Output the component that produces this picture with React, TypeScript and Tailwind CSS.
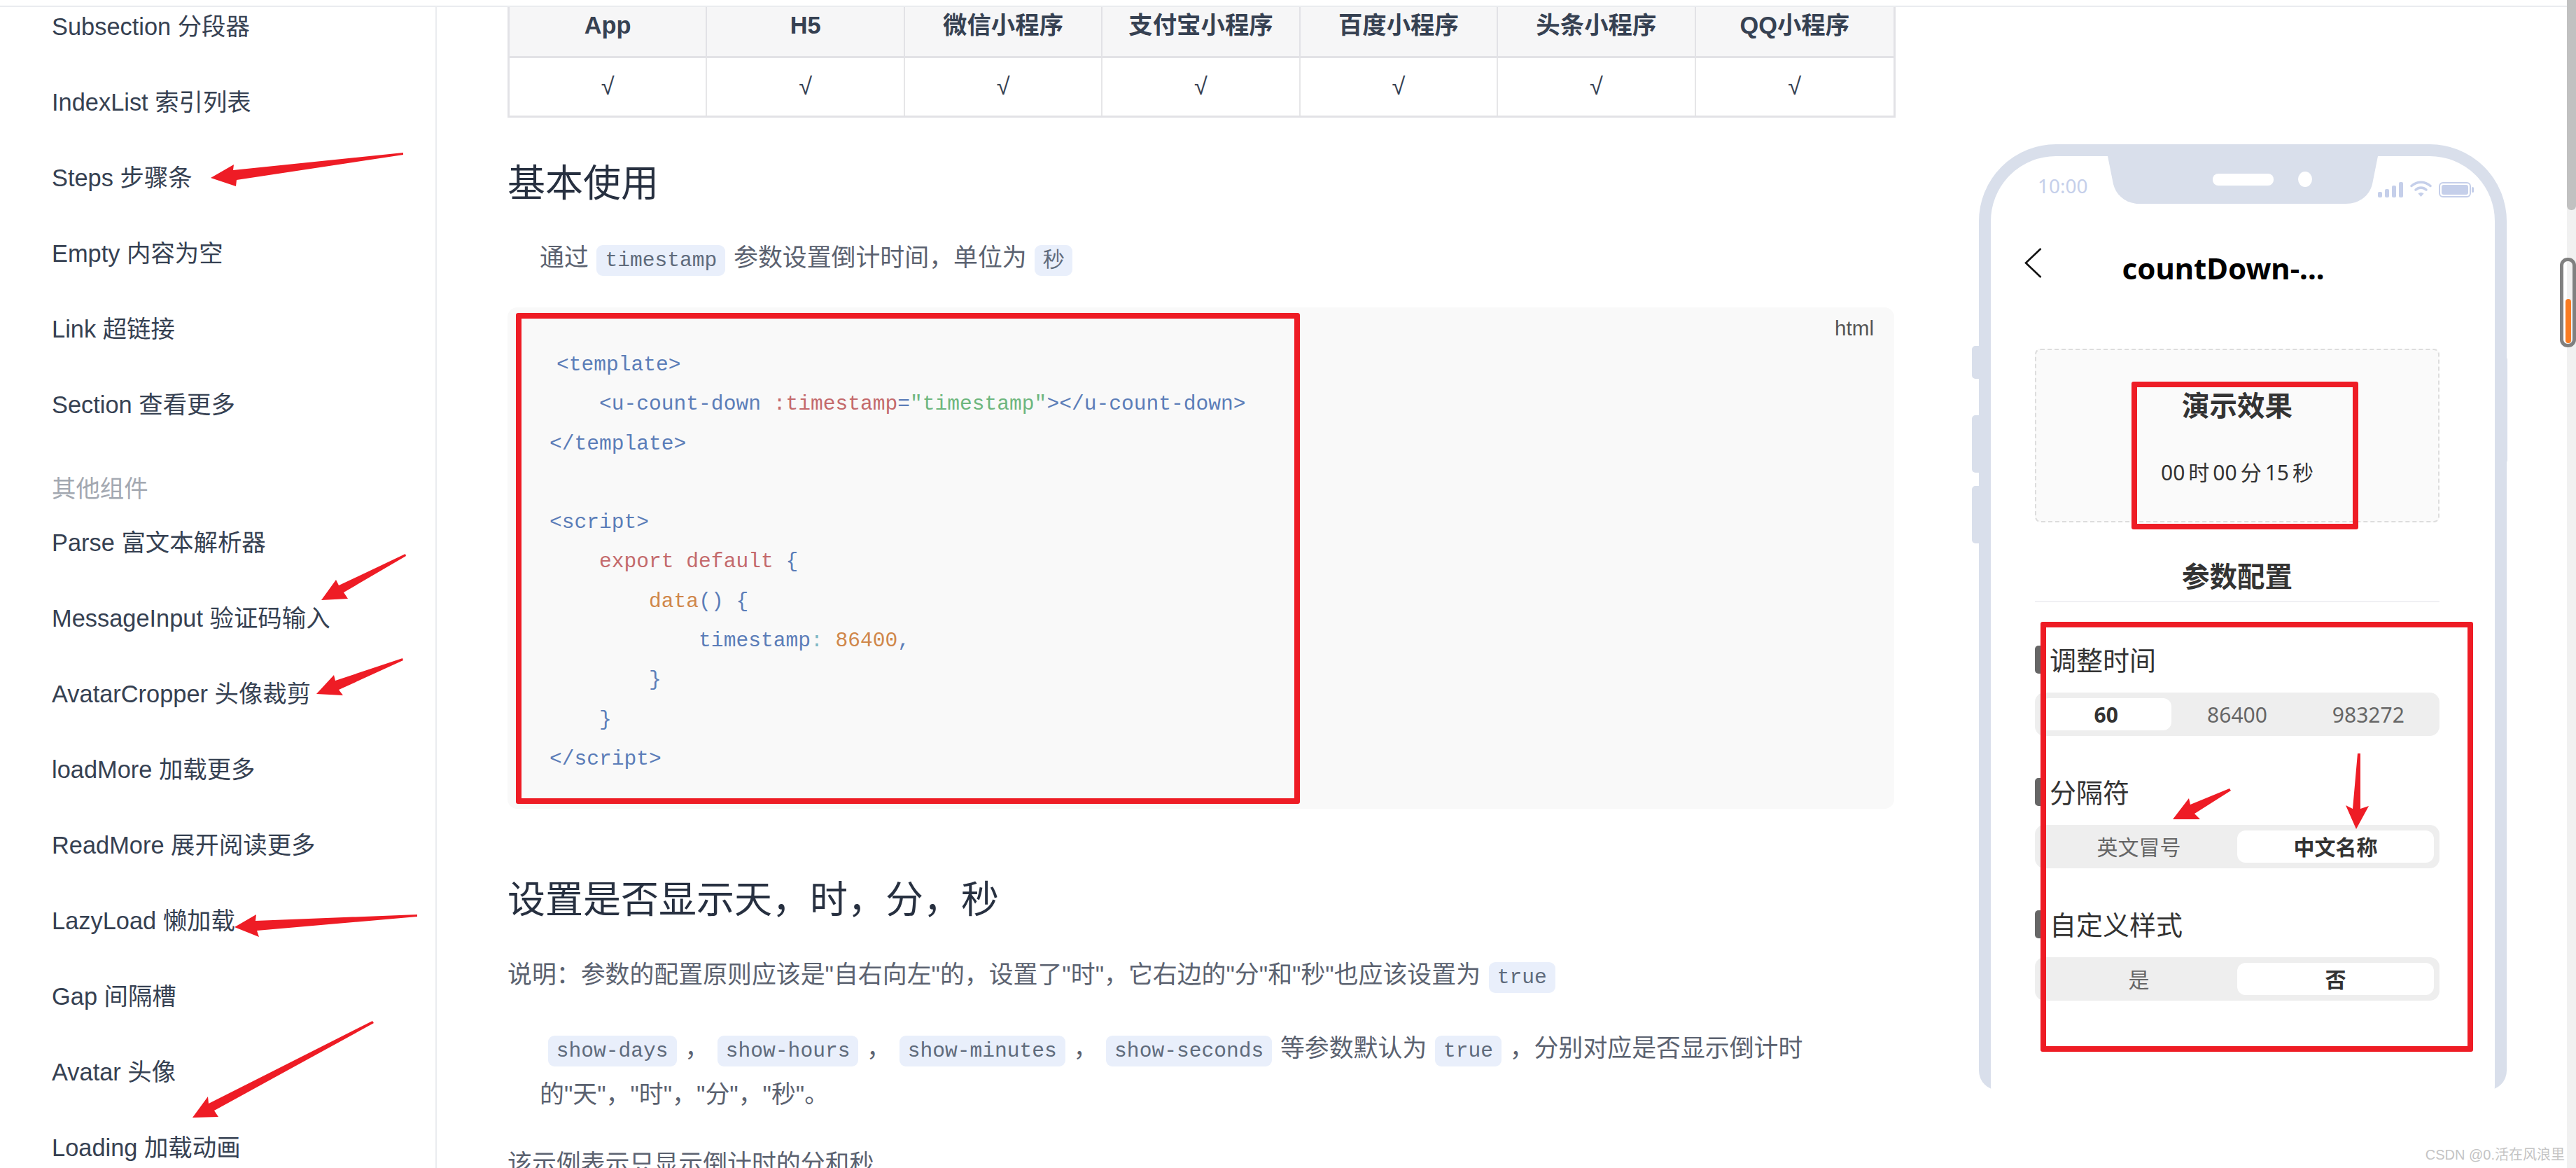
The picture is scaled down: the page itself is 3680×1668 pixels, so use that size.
const sans = "font-['Liberation_Sans','Noto_Sans_CJK_SC',sans-serif]"

const menuTop = ['Subsection 分段器', 'IndexList 索引列表', 'Steps 步骤条', 'Empty 内容为空', 'Link 超链接', 'Section 查看更多']
const menuOther = ['Parse 富文本解析器', 'MessageInput 验证码输入', 'AvatarCropper 头像裁剪', 'loadMore 加载更多', 'ReadMore 展开阅读更多', 'LazyLoad 懒加载', 'Gap 间隔槽', 'Avatar 头像', 'Loading 加载动画']
const platforms = ['App', 'H5', '微信小程序', '支付宝小程序', '百度小程序', '头条小程序', 'QQ小程序']

const arrows = [
  '301,254 334,235 333,243 576,218 576,221 338,257 337,266',
  '459,857 480,828 484,836 579,791 580,794 491,846 497,855',
  '452,991 477,964 479,972 575,940 576,943 484,985 490,993',
  '335,1324 366,1306 365,1315 596,1306 596,1309 367,1329 370,1338',
  '275,1596 297,1566 298,1576 532,1458 534,1461 306,1586 312,1595',
  '3104,1170 3127,1140 3129,1149 3185,1126 3187,1129 3135,1162 3143,1170',
  '3366,1184 3351,1150 3361,1155 3368,1076 3372,1076 3372,1155 3384,1151',
]

const Tag = ({ children }: { children: string }) => (
  <code className="mx-[2px] rounded-[9px] bg-[#e9effb] px-[12px] py-[5px] font-['Liberation_Mono',monospace] text-[29.6px] text-[#5f6b7c]">
    {children}
  </code>
)

const Blue = ({ children }: { children: string }) => <span className="text-[#5b7db8]">{children}</span>
const Red = ({ children }: { children: string }) => <span className="text-[#c46a6c]">{children}</span>
const Green = ({ children }: { children: string }) => <span className="text-[#6db67e]">{children}</span>
const Orange = ({ children }: { children: string }) => <span className="text-[#d0874a]">{children}</span>

const CodeBlock = () => (
  <div className="relative mt-[36px] h-[716px] w-[1981px] rounded-[14px] bg-[#f9f9f9] pl-[60px] pt-[54px]">
    <span className="absolute right-[29px] top-[8px] text-[29.6px] text-[#555]">html</span>
    <pre className="font-['Liberation_Mono',monospace] text-[29.6px] leading-[56.3px] text-[#5b7db8]">
      <div className="pl-[10px]"><Blue>{'<template>'}</Blue></div>
      <div><Blue>{'    <u-count-down '}</Blue><Red>:timestamp</Red>=<Green>"timestamp"</Green><Blue>{'></u-count-down>'}</Blue></div>
      <div><Blue>{'</template>'}</Blue></div>
      <div>&nbsp;</div>
      <div><Blue>{'<script>'}</Blue></div>
      <div><Red>{'    export default'}</Red>{' {'}</div>
      <div><Orange>{'        data'}</Orange>{'() {'}</div>
      <div>{'            timestamp'}<span className="text-[#7fb7c4]">:</span> <Orange>86400</Orange>,</div>
      <div>{'        }'}</div>
      <div>{'    }'}</div>
      <div>{'</script>'}</div>
    </pre>
    {/* red annotation frame */}
    <div className="absolute left-[12px] top-[8px] h-[701px] w-[1120px] rounded-[3px] border-[8px] border-[#ee1c25]" />
  </div>
)

const StatusIcons = () => (
  <div className="flex items-end gap-[10px] text-[#c5cfea]">
    <svg width="36" height="22" viewBox="0 0 36 22" fill="currentColor">
      <rect x="0" y="14" width="6" height="8" rx="2" />
      <rect x="10" y="10" width="6" height="12" rx="2" />
      <rect x="20" y="5" width="6" height="17" rx="2" />
      <rect x="30" y="0" width="6" height="22" rx="2" />
    </svg>
    <svg width="31" height="24" viewBox="0 0 31 24" fill="none" stroke="currentColor" strokeWidth="3.5" strokeLinecap="round">
      <path d="M2 7.500C10 0.500 21 0.500 29 7.500" />
      <path d="M8 13C12.500 9 18.500 9 23 13" />
      <path d="M15.500 23L11.500 18.500C13.500 16.500 17.500 16.500 19.500 18.500Z" fill="currentColor" stroke="none" />
    </svg>
    <svg width="50" height="22" viewBox="0 0 50 22" fill="currentColor">
      <rect x="1" y="1" width="44" height="20" rx="5" fill="none" stroke="currentColor" strokeWidth="2" />
      <rect x="4" y="4" width="38" height="14" rx="3" />
      <rect x="47" y="7" width="3" height="8" rx="1.500" />
    </svg>
  </div>
)

const Segment = ({ options, active }: { options: string[]; active: number }) => (
  <div className="flex h-[62px] w-[578px] gap-0 rounded-[14px] bg-[#eeeeee] p-[8px]">
    {options.map((opt, i) => (
      <div
        key={opt}
        className={`flex flex-1 items-center justify-center rounded-[12px] text-[30px] ${
          i === active ? 'bg-white font-bold text-[#333]' : 'text-[#666]'
        }`}
      >
        {opt}
      </div>
    ))}
  </div>
)

const Param = ({ label, options, active }: { label: string; options: string[]; active: number }) => (
  <div className="flex flex-col">
    <div className="flex h-[40px] items-center gap-[12px]">
      <span className="h-[40px] w-[9px] rounded-l-[5px] bg-[#666]" />
      <span className="text-[38px] leading-[40px] text-[#333]">{label}</span>
    </div>
    <div className="mt-[27px]">
      <Segment options={options} active={active} />
    </div>
  </div>
)

const Phone = () => (
  <div className="relative ml-[93px] mt-[196px] w-[765px] pl-[10px] font-['Noto_Sans','Noto_Sans_CJK_SC',sans-serif]">
    {/* side buttons */}
    <div className="absolute left-0 top-[288px] h-[47px] w-[12px] rounded-l-[5px] bg-[#d9dfeb]" />
    <div className="absolute left-0 top-[387px] h-[82px] w-[12px] rounded-l-[5px] bg-[#d9dfeb]" />
    <div className="absolute left-0 top-[488px] h-[82px] w-[12px] rounded-l-[5px] bg-[#d9dfeb]" />
    <div className="absolute left-[752px] top-[303px] h-[153px] w-[13px] rounded-r-[5px] bg-[#d9dfeb]" />

    <div className="h-[1351px] w-[754px] overflow-hidden rounded-b-[28px]">
      <div className="relative h-[1452px] rounded-[110px] border-[17px] border-[#d9dfeb] bg-white">
        {/* notch */}
        <svg className="absolute left-[167px] top-0" width="386" height="68" viewBox="0 0 386 68">
          <path d="M0 0H386L378 40C374 56 360 68 340 68H46C26 68 12 56 8 40Z" fill="#d9dfeb" />
          <rect x="150" y="25" width="87" height="17" rx="8" fill="#fff" />
          <ellipse cx="282" cy="33" rx="10" ry="11" fill="#fff" />
        </svg>

        <div className="flex h-[85px] items-end justify-between pb-[26px] pl-[67px] pr-[30px]">
          <span className="text-[28px] leading-[34px] text-[#c5cfea]">10:00</span>
          <StatusIcons />
        </div>

        <div className="relative mt-[42px] flex h-[64px] items-center justify-center pr-[56px]">
          <svg className="absolute left-[48px] top-[4px]" width="25" height="43" viewBox="0 0 25 43" fill="none" stroke="#111" strokeWidth="2.600">
            <path d="M23.500 1L2 21.500L23.500 42" />
          </svg>
          <span className="text-[42px] font-bold text-black">countDown-...</span>
        </div>

        <div className="relative ml-[63px] mt-[84px] flex h-[248px] w-[578px] flex-col items-center rounded-[8px] border-2 border-dashed border-[#dddddd] bg-[#fafafa] pt-[54px]">
          <span className="text-[39.500px] font-bold leading-[50px] text-[#333]">演示效果</span>
          <div className="mt-[50px] flex items-center gap-[5px] text-[30px] leading-[42px] text-[#333]">
            <span>00</span><span>时</span><span>00</span><span>分</span><span>15</span><span>秒</span>
          </div>
          {/* red annotation frame */}
          <div className="absolute left-[136px] top-[45px] h-[211px] w-[324px] rounded-[3px] border-[8px] border-[#ee1c25]" />
        </div>

        <div className="ml-[63px] mt-[52px] flex h-[62px] w-[578px] items-start justify-center border-b-2 border-[#f0f0f3]">
          <span className="text-[39.500px] font-bold leading-[50px] text-[#333]">参数配置</span>
        </div>

        <div className="relative ml-[63px] mt-[62px] flex w-[578px] flex-col gap-[60px]">
          <Param label="调整时间" options={['60', '86400', '983272']} active={0} />
          <Param label="分隔符" options={['英文冒号', '中文名称']} active={1} />
          <Param label="自定义样式" options={['是', '否']} active={1} />
          {/* red annotation frame */}
          <div className="absolute left-[8px] top-[-34px] h-[614px] w-[618px] rounded-[3px] border-[8px] border-[#ee1c25]" />
        </div>
      </div>
    </div>
  </div>
)

export default function App() {
  return (
    <div className={`relative h-[1668px] w-[3680px] overflow-hidden bg-white ${sans}`}>
      <div className="h-[10px] w-[3667px] border-b-2 border-[#eaecef]" />

      <div className="flex h-[1658px] w-[3667px]">
        {/* sidebar */}
        <aside className="h-full w-[624px] shrink-0 border-r-2 border-[#eaecef] pl-[74px] text-[34.400px] text-[#364152]">
          {menuTop.map((item) => (
            <div key={item} className="flex h-[108px] items-center first:-mt-[25px]">{item}</div>
          ))}
          <div className="mt-[46px] flex h-[40px] items-center text-[#a3a8b1]">其他组件</div>
          <div className="mt-[3px]">
            {menuOther.map((item) => (
              <div key={item} className="flex h-[108px] items-center">{item}</div>
            ))}
          </div>
        </aside>

        {/* article */}
        <main className="w-[2100px] shrink-0 pl-[101px] text-[#5b6270]">
          <div className="grid w-[1983px] grid-cols-7 border-x-[3px] border-b-[3px] border-[#e2e2e6] text-center text-[34.400px]">
            {platforms.map((p, i) => (
              <div
                key={p}
                className={`flex h-[73px] items-center justify-center border-b-[3px] border-[#e2e2e6] bg-[#f6f6f7] pb-[16px] font-bold text-[#364152] ${i < 6 ? 'border-r-2' : ''}`}
              >
                {p}
              </div>
            ))}
            {platforms.map((p, i) => (
              <div
                key={p}
                className={`flex h-[82px] items-center justify-center border-[#e6e6e8] text-[#364152] ${i < 6 ? 'border-r-2' : ''}`}
              >
                √
              </div>
            ))}
          </div>

          <h2 className="mt-[59px] text-[54px] leading-[70px] text-[#273040]">基本使用</h2>

          <p className="mt-[40px] pl-[46px] text-[34.900px] leading-[62px]">
            通过 <Tag>timestamp</Tag> 参数设置倒计时间，单位为 <Tag>秒</Tag>
          </p>

          <CodeBlock />

          <h2 className="mt-[95px] text-[54px] leading-[70px] text-[#273040]">设置是否显示天，时，分，秒</h2>

          <p className="mt-[41px] text-[34.900px] leading-[62px]">
            说明：参数的配置原则应该是"自右向左"的，设置了"时"，它右边的"分"和"秒"也应该设置为 <Tag>true</Tag>
          </p>

          <p className="mt-[39px] w-[1900px] pl-[46px] text-[34.900px] leading-[62px]">
            &nbsp;<Tag>show-days</Tag> ， <Tag>show-hours</Tag> ， <Tag>show-minutes</Tag> ， <Tag>show-seconds</Tag> 等参数默认为 <Tag>true</Tag> ，分别对应是否显示倒计时的"天"，"时"，"分"，"秒"。
          </p>

          <p className="mt-[37px] text-[34.900px] leading-[62px]">该示例表示只显示倒计时的分和秒</p>
        </main>

        <Phone />
      </div>

      {/* scrollbar */}
      <div className="absolute right-0 top-0 h-full w-[13px] bg-[#f1f1f1]">
        <div className="h-[300px] w-full rounded-b-[6px] bg-[#c1c1c1]" />
      </div>
      <div className="absolute right-0 top-[368px] flex h-[128px] w-[23px] items-end justify-center rounded-[11px] border-[5px] border-[#808080] pb-[1px]">
        <div className="h-[63px] w-[8px] rounded-[4px] bg-[#f97b21]" />
      </div>

      {/* red hand-drawn arrows */}
      <svg className="absolute left-0 top-0" width="3680" height="1668" fill="#ee1c25">
        {arrows.map((pts) => (
          <polygon key={pts} points={pts} />
        ))}
      </svg>

      <span className="absolute right-[16px] top-[1637px] text-[20px] leading-[24px] text-[#c4c4c4]">CSDN @0.活在风浪里</span>
    </div>
  )
}
